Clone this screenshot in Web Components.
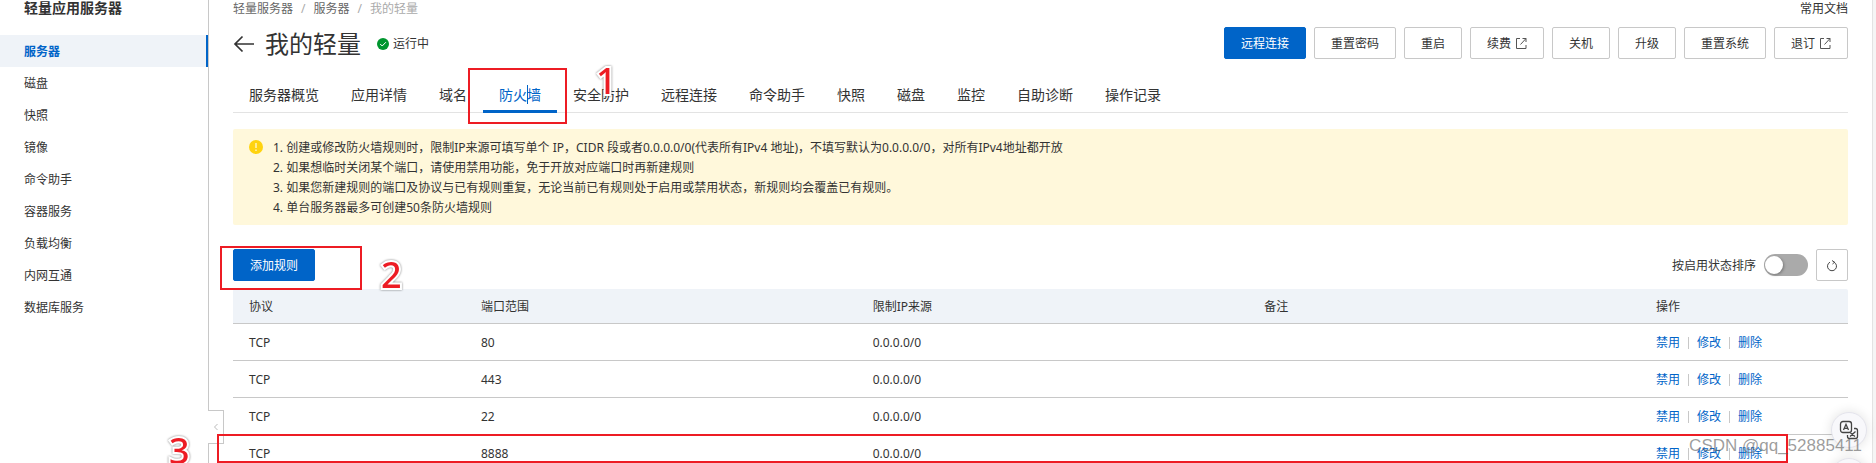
<!DOCTYPE html>
<html lang="zh-CN">
<head>
  <meta charset="UTF-8">
  <meta name="viewport" content="width=device-width, initial-scale=1.0">
  <title>轻量应用服务器</title>
  <style>
    :root {
      --color-primary: #0064c8;
      --color-text: #333;
      --color-muted: #aaa;
      --color-border: #c8c8c8;
      --color-fill: #eff3f8;
      --color-mark: #ed1c24;
    }

    body {
      margin: 0;
      height: 100vh;
      overflow: hidden;
      background: #fff;
      color: var(--color-text);
      font: 12px/20px "Noto Sans", "Noto Sans CJK SC", sans-serif;
    }
  </style>
</head>
<body>
  <console-page>
    <side-nav slot="side" heading="轻量应用服务器"
      data-links='["服务器","磁盘","快照","镜像","命令助手","容器服务","负载均衡","内网互通","数据库服务"]'></side-nav>

    <bread-crumb data-links='["轻量服务器","服务器","我的轻量"]'><a slot="extra" href="#docs">常用文档</a></bread-crumb>

    <page-title status="运行中">
      我的轻量
      <ui-button slot="actions" kind="primary">远程连接</ui-button>
      <ui-button slot="actions">重置密码</ui-button>
      <ui-button slot="actions">重启</ui-button>
      <ui-button slot="actions" external>续费</ui-button>
      <ui-button slot="actions">关机</ui-button>
      <ui-button slot="actions">升级</ui-button>
      <ui-button slot="actions">重置系统</ui-button>
      <ui-button slot="actions" external>退订</ui-button>
    </page-title>

    <tab-bar active="3"
      data-tabs='["服务器概览","应用详情","域名","防火墙","安全防护","远程连接","命令助手","快照","磁盘","监控","自助诊断","操作记录"]'></tab-bar>

    <notice-box>
      <div>1. 创建或修改防火墙规则时，限制IP来源可填写单个 IP，CIDR 段或者0.0.0.0/0(代表所有IPv4 地址)，不填写默认为0.0.0.0/0，对所有IPv4地址都开放</div>
      <div>2. 如果想临时关闭某个端口，请使用禁用功能，免于开放对应端口时再新建规则</div>
      <div>3. 如果您新建规则的端口及协议与已有规则重复，无论当前已有规则处于启用或禁用状态，新规则均会覆盖已有规则。</div>
      <div>4. 单台服务器最多可创建50条防火墙规则</div>
    </notice-box>

    <rule-toolbar>
      <ui-button kind="primary">添加规则</ui-button>
    </rule-toolbar>

    <rule-table data-rows='[["TCP","80","0.0.0.0/0"],["TCP","443","0.0.0.0/0"],["TCP","22","0.0.0.0/0"],["TCP","8888","0.0.0.0/0"]]'></rule-table>
  </console-page>

  <float-tools></float-tools>

  <mark-layer></mark-layer>

  <script>
    class ConsolePage extends HTMLElement {
      constructor() {
        super();
        this.attachShadow({ mode: 'open' });
      }

      connectedCallback() {
        this.shadowRoot.innerHTML = /*html*/ `
          <style>
            :host {
              display: flex;
              height: 100vh;
              overflow: hidden;
              background: #f5f5f5;
            }

            main {
              flex: 1;
              min-width: 0;
              padding: 0 24px;
              background: #fff;
              border-right: 1px solid #e3e3e3;
              margin-right: 3px;
            }
          </style>
          <slot name="side"></slot>
          <main><slot></slot></main>
        `;
      }
    }

    class SideNav extends HTMLElement {
      constructor() {
        super();
        this.attachShadow({ mode: 'open' });
      }

      connectedCallback() {
        const links = JSON.parse(this.dataset.links || '[]');

        this.shadowRoot.innerHTML = /*html*/ `
          <style>
            :host {
              display: block;
              position: relative;
              box-sizing: border-box;
              flex: 0 0 209px;
              background: #fff;
              border-right: 1px solid var(--color-border);
            }

            h2 {
              margin: 0 0 19px;
              padding-left: 24px;
              font-size: 14px;
              line-height: 16px;
            }

            nav a {
              display: block;
              padding: 2px 0 0 24px;
              line-height: 30px;
              color: inherit;
              text-decoration: none;
            }

            nav a.active {
              background: var(--color-fill);
              border-right: 2px solid var(--color-primary);
              color: var(--color-primary);
              font-weight: bold;
            }

            /* collapse handle sits over the divider */
            button {
              position: absolute;
              left: 208px;
              bottom: 19px;
              width: 16px;
              height: 34px;
              padding: 0;
              display: flex;
              align-items: center;
              justify-content: center;
              background: #fff;
              border: 1px solid var(--color-border);
              border-left: 0;
            }
          </style>
          <h2>${this.getAttribute('heading')}</h2>
          <nav>
            ${links.map((text, index) =>
              `<a href="#" class="${index === 0 ? 'active' : ''}">${text}</a>`).join('')}
          </nav>
          <button type="button" aria-label="收起">
            <svg width="6" height="8" viewBox="0 0 6 8" fill="none" stroke="#bbb"><path d="M4.5 1L1.5 4l3 3"/></svg>
          </button>
        `;
      }
    }

    class BreadCrumb extends HTMLElement {
      constructor() {
        super();
        this.attachShadow({ mode: 'open' });
      }

      connectedCallback() {
        const links = JSON.parse(this.dataset.links || '[]');
        const last = links.length - 1;

        this.shadowRoot.innerHTML = /*html*/ `
          <style>
            :host {
              display: flex;
              justify-content: space-between;
              line-height: 18px;
            }

            nav {
              display: flex;
              gap: 8px;
              color: #666;
            }

            a, ::slotted(a) {
              color: inherit;
              text-decoration: none;
            }

            .sep, .current {
              color: var(--color-muted);
            }
          </style>
          <nav>
            ${links.map((text, index) => index === last
              ? `<span class="current">${text}</span>`
              : `<a href="#">${text}</a><span class="sep">/</span>`).join('')}
          </nav>
          <slot name="extra"></slot>
        `;
      }
    }

    class PageTitle extends HTMLElement {
      constructor() {
        super();
        this.attachShadow({ mode: 'open' });
      }

      connectedCallback() {
        this.shadowRoot.innerHTML = /*html*/ `
          <style>
            :host {
              display: flex;
              align-items: center;
              justify-content: space-between;
              margin-top: 9px;
            }

            .title, .status, .actions {
              display: flex;
              align-items: center;
            }

            .title {
              padding-top: 2px;
            }

            .title a {
              display: flex;
              margin-right: 10px;
              color: inherit;
            }

            h1 {
              margin: 0 16px 0 0;
              font-size: 24px;
              line-height: 30px;
              font-weight: normal;
            }

            .status {
              gap: 4px;
            }

            .actions {
              gap: 8px;
            }
          </style>
          <div class="title">
            <a href="#" aria-label="返回">
              <svg width="22" height="18" viewBox="0 0 22 18" fill="none" stroke="currentColor" stroke-width="1.7"><path d="M21 9H2.500M9.500 1.500L2 9l7.500 7.500"/></svg>
            </a>
            <h1><slot></slot></h1>
            <span class="status">
              <svg width="12" height="12" viewBox="0 0 12 12"><circle cx="6" cy="6" r="6" fill="#00962f"/><path d="M3.2 6l2 2 3.7-3.8" fill="none" stroke="#fff"/></svg>
              ${this.getAttribute('status')}
            </span>
          </div>
          <div class="actions"><slot name="actions"></slot></div>
        `;
      }
    }

    class UiButton extends HTMLElement {
      constructor() {
        super();
        this.attachShadow({ mode: 'open' });
      }

      connectedCallback() {
        const icon = this.hasAttribute('external')
          ? '<svg width="12" height="12" viewBox="0 0 12 12" fill="none" stroke="#555"><path d="M5 .5H1.500v10h9.500V7M5.500 6.500l5.500-6M7.500 .5H11V4"/></svg>'
          : '';

        this.shadowRoot.innerHTML = /*html*/ `
          <style>
            :host {
              display: inline-flex;
            }

            button {
              display: flex;
              align-items: center;
              gap: 4px;
              height: 32px;
              padding: 2px 16px 0;
              font: inherit;
              color: inherit;
              background: #fff;
              border: 1px solid var(--color-border);
              border-radius: 2px;
              cursor: pointer;
            }

            :host([kind="primary"]) button {
              background: var(--color-primary);
              border-color: var(--color-primary);
              color: #fff;
            }
          </style>
          <button type="button"><slot></slot>${icon}</button>
        `;
      }
    }

    class TabBar extends HTMLElement {
      constructor() {
        super();
        this.attachShadow({ mode: 'open' });
      }

      connectedCallback() {
        const tabs = JSON.parse(this.dataset.tabs || '[]');
        const active = Number(this.getAttribute('active'));

        this.shadowRoot.innerHTML = /*html*/ `
          <style>
            :host {
              display: flex;
              margin-top: 18px;
              box-shadow: inset 0 -1px #e3e3e3;
            }

            button {
              position: relative;
              height: 36px;
              padding: 3px 16px 0;
              font: inherit;
              font-size: 14px;
              color: inherit;
              background: none;
              border: 0;
              border-bottom: 3px solid transparent;
              cursor: pointer;
            }

            button.active {
              color: var(--color-primary);
              border-color: var(--color-primary);
            }

            /* text caret left inside the label */
            button.active::after {
              content: '';
              position: absolute;
              left: 44px;
              top: 8px;
              height: 19px;
              border-left: 1px solid var(--color-primary);
            }
          </style>
          ${tabs.map((text, index) =>
            `<button type="button" class="${index === active ? 'active' : ''}">${text}</button>`).join('')}
        `;
      }
    }

    class NoticeBox extends HTMLElement {
      constructor() {
        super();
        this.attachShadow({ mode: 'open' });
      }

      connectedCallback() {
        this.shadowRoot.innerHTML = /*html*/ `
          <style>
            :host {
              display: flex;
              align-items: flex-start;
              gap: 10px;
              margin-top: 16px;
              padding: 9px 16px 7px;
              background: #fff8db;
              border-radius: 2px;
            }

            svg {
              flex: none;
              margin-top: 2px;
            }
          </style>
          <svg width="14" height="14" viewBox="0 0 14 14"><circle cx="7" cy="7" r="7" fill="#ffd30f"/><path d="M7 3v5M7 9.500v1.500" stroke="#fff8db" stroke-width="1.300"/></svg>
          <div><slot></slot></div>
        `;
      }
    }

    class RuleToolbar extends HTMLElement {
      constructor() {
        super();
        this.attachShadow({ mode: 'open' });
      }

      connectedCallback() {
        this.shadowRoot.innerHTML = /*html*/ `
          <style>
            :host {
              display: flex;
              justify-content: space-between;
              margin: 24px 0 8px;
            }

            .right, label {
              display: flex;
              align-items: center;
              gap: 8px;
            }

            label span {
              padding-top: 2px;
            }

            input {
              appearance: none;
              display: flex;
              box-sizing: border-box;
              width: 44px;
              height: 22px;
              margin: 0;
              padding: 2px 1px;
              background: #aaa;
              border-radius: 11px;
            }

            input::before {
              content: '';
              width: 18px;
              height: 18px;
              background: #fff;
              border-radius: 50%;
              box-shadow: 1px 1px 3px rgba(0, 0, 0, 0.3);
            }

            input:checked {
              justify-content: flex-end;
              background: var(--color-primary);
            }

            button {
              display: flex;
              align-items: center;
              justify-content: center;
              width: 32px;
              height: 32px;
              padding: 2px 0 0;
              background: #fff;
              border: 1px solid var(--color-border);
              border-radius: 2px;
            }
          </style>
          <slot></slot>
          <div class="right">
            <label><span>按启用状态排序</span> <input type="checkbox" role="switch"></label>
            <button type="button" aria-label="刷新">
              <svg width="12" height="12" viewBox="0 0 12 12" fill="none" stroke="#444"><path d="M8 2.200a4.500 4.500 0 1 1-4 0M6 .500l2.500 1.700L6.500 4"/></svg>
            </button>
          </div>
        `;
      }
    }

    class RuleTable extends HTMLElement {
      constructor() {
        super();
        this.attachShadow({ mode: 'open' });
      }

      connectedCallback() {
        const rows = JSON.parse(this.dataset.rows || '[]');

        this.shadowRoot.innerHTML = /*html*/ `
          <style>
            :host {
              display: block;
            }

            table {
              width: 100%;
              table-layout: fixed;
              border-spacing: 0;
            }

            .protocol {
              width: 232px;
            }

            .actions {
              width: 208px;
            }

            th, td {
              padding: 9px 16px 7px;
              text-align: left;
              font-weight: normal;
              border-bottom: 1px solid var(--color-border);
            }

            th {
              padding: 8px 16px 6px;
              background: var(--color-fill);
            }

            th:first-child {
              border-top-left-radius: 2px;
            }

            th:last-child {
              border-top-right-radius: 2px;
            }

            .links {
              display: flex;
              align-items: center;
              gap: 8px;
            }

            .links a {
              color: var(--color-primary);
              text-decoration: none;
            }

            .links i {
              width: 1px;
              height: 12px;
              background: var(--color-border);
            }
          </style>
          <table>
            <colgroup><col class="protocol"><col><col><col><col class="actions"></colgroup>
            <thead>
              <tr><th>协议</th><th>端口范围</th><th>限制IP来源</th><th>备注</th><th>操作</th></tr>
            </thead>
            <tbody>
              ${rows.map(([protocol, port, source]) => `
                <tr>
                  <td>${protocol}</td>
                  <td>${port}</td>
                  <td>${source}</td>
                  <td></td>
                  <td><div class="links"><a href="#">禁用</a><i></i><a href="#">修改</a><i></i><a href="#">删除</a></div></td>
                </tr>`).join('')}
            </tbody>
          </table>
        `;
      }
    }

    class FloatTools extends HTMLElement {
      constructor() {
        super();
        this.attachShadow({ mode: 'open' });
      }

      connectedCallback() {
        this.shadowRoot.innerHTML = /*html*/ `
          <style>
            :host {
              position: absolute;
              right: 9px;
              top: 412px;
              bottom: 0;
              padding: 0 0 0 14px;
              overflow: visible;
              display: grid;
              grid-auto-rows: 36px;
              gap: 10px;
            }

            button {
              display: flex;
              align-items: center;
              justify-content: center;
              width: 36px;
              padding: 0;
              background: #f8f8fb;
              border: 1px solid #e4e4ec;
              border-radius: 50%;
              box-shadow: 0 0 12px rgba(0, 0, 0, 0.12);
            }
          </style>
          <button type="button" aria-label="翻译">
            <svg width="20" height="20" viewBox="0 0 20 20" fill="none" stroke="#444" stroke-width="1.300"><rect x="1.500" y="1.500" width="11" height="11" rx="2.500"/><path d="M4.500 10L7 4.300 9.500 10M5.400 8.300h3.200M15 8.500h1.500a2 2 0 0 1 2 2v6a2 2 0 0 1-2 2h-6a2 2 0 0 1-2-2V15M11 16.500l5.500-5M11.500 13l4.500 3.500"/></svg>
          </button>
          <button type="button" aria-label="更多"></button>
        `;
      }
    }

    /* hand-drawn annotations and watermark above the page */
    class MarkLayer extends HTMLElement {
      constructor() {
        super();
        this.attachShadow({ mode: 'open' });
      }

      connectedCallback() {
        this.shadowRoot.innerHTML = /*html*/ `
          <style>
            :host {
              position: absolute;
              inset: 0;
              overflow: hidden;
              pointer-events: none;
            }

            .box, .num, .watermark {
              position: absolute;
              box-sizing: border-box;
            }

            .box {
              border: 2px solid var(--color-mark);
            }

            .num {
              font-size: 36px;
              font-weight: 500;
              line-height: 36px;
              color: var(--color-mark);
              -webkit-text-stroke: 4px #fff;
              paint-order: stroke fill;
              filter: drop-shadow(0 0 1px rgba(0, 0, 0, 0.5));
            }

            .watermark {
              right: 14px;
              top: 434px;
              font-family: "Liberation Sans", sans-serif;
              font-size: 17px;
              line-height: 24px;
              color: rgba(90, 90, 90, 0.6);
            }
          </style>
          <div class="box" style="left: 468px; top: 68px; width: 99px; height: 56px"></div>
          <div class="box" style="left: 220px; top: 246px; width: 142px; height: 44px"></div>
          <div class="box" style="left: 217px; top: 434px; right: 88px; height: 29px"></div>
          <span class="num" style="left: 596px; top: 63px">1</span>
          <span class="num" style="left: 381px; top: 257px">2</span>
          <span class="num" style="left: 169px; top: 433px">3</span>
          <span class="watermark">CSDN @qq_52885411</span>
        `;
      }
    }

    customElements.define('console-page', ConsolePage);
    customElements.define('side-nav', SideNav);
    customElements.define('bread-crumb', BreadCrumb);
    customElements.define('page-title', PageTitle);
    customElements.define('ui-button', UiButton);
    customElements.define('tab-bar', TabBar);
    customElements.define('notice-box', NoticeBox);
    customElements.define('rule-toolbar', RuleToolbar);
    customElements.define('rule-table', RuleTable);
    customElements.define('float-tools', FloatTools);
    customElements.define('mark-layer', MarkLayer);
  </script>
</body>
</html>
